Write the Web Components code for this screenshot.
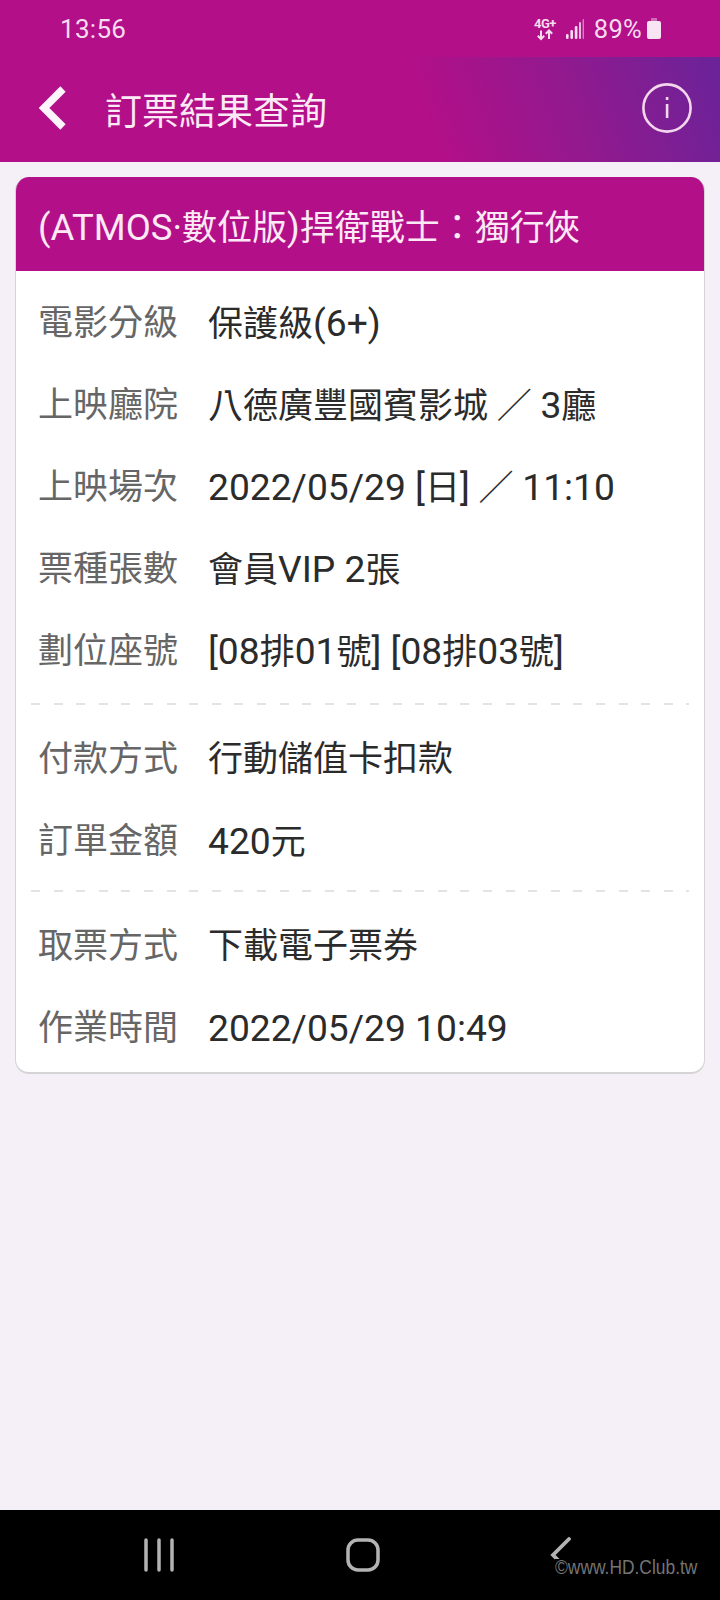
<!DOCTYPE html>
<html lang="zh-Hant">
<head>
<meta charset="utf-8">
<title>訂票結果查詢</title>
<style>
    html, body { margin: 0; padding: 0; }
    body {
        width: 720px;
        height: 1600px;
        display: flex;
        flex-direction: column;
        background: #f5f0f7;
        font-family: Roboto, "Noto Sans CJK TC", sans-serif;
        overflow: hidden;
    }
</style>
</head>
<body>
<status-bar></status-bar>
<app-header>訂票結果查詢</app-header>
<ticket-card>
    <span slot="heading"><lat-text>(ATMOS·</lat-text>數位版<lat-text>)</lat-text>捍衛戰士：獨行俠</span>
    <info-row label="電影分級">保護級<lat-text>(6+)</lat-text></info-row>
    <info-row label="上映廳院">八德廣豐國賓影城 ／ <lat-text>3</lat-text>廳</info-row>
    <info-row label="上映場次"><lat-text>2022/05/29 [</lat-text>日<lat-text>]</lat-text> ／ <lat-text>11:10</lat-text></info-row>
    <info-row label="票種張數">會員<lat-text>VIP 2</lat-text>張</info-row>
    <info-row label="劃位座號"><lat-text>[08</lat-text>排<lat-text>01</lat-text>號<lat-text>] [08</lat-text>排<lat-text>03</lat-text>號<lat-text>]</lat-text></info-row>
    <dash-line></dash-line>
    <info-row label="付款方式">行動儲值卡扣款</info-row>
    <info-row label="訂單金額"><lat-text>420</lat-text>元</info-row>
    <dash-line class="second"></dash-line>
    <info-row label="取票方式">下載電子票券</info-row>
    <info-row label="作業時間"><lat-text>2022/05/29 10:49</lat-text></info-row>
</ticket-card>
<nav-bar></nav-bar>

<script>
class LatText extends HTMLElement {
    constructor() {
        super();
        this.shadowDOM = this.attachShadow({mode: 'open'});
        // no whitespace here: it would show up between the CJK and latin runs
        this.shadowDOM.innerHTML = `<style>:host { display: inline; font-size: var(--lat-size, 37.2px); }</style><slot></slot>`;
    }
}

class StatusBar extends HTMLElement {
    constructor() {
        super();
        this.shadowDOM = this.attachShadow({mode: 'open'});
        this.shadowDOM.innerHTML = `
            <style>
                :host {
                    display: flex;
                    flex: 0 0 57px;
                    align-items: center;
                    justify-content: space-between;
                    padding: 0 59px 0 60px;
                    background: #b30f88;
                    color: #f6dcef;
                }
                .time { font-size: 26px; letter-spacing: 0.3px; }
                .right { display: flex; align-items: center; }
                .net { width: 24px; height: 24px; margin-right: 8px; }
                .sig { width: 18px; height: 20px; margin-right: 10px; }
                .pct { font-size: 25.5px; letter-spacing: 0.3px; }
                .bat { width: 14px; height: 21px; margin-left: 5px; }
                svg { display: block; }
            </style>
            <span class="time">13:56</span>
            <div class="right">
                <svg class="net" viewBox="0 0 24 24">
                    <text x="0" y="11" font-family="Roboto, sans-serif" font-size="13" font-weight="700" letter-spacing="-0.5" fill="#f6dcef">4G+</text>
                    <path d="M7 13.5v8.5M3.8 18.8 7 22l3.2-3.2M15 22v-8.5M11.8 16.7 15 13.5l3.2 3.2" fill="none" stroke="#f6dcef" stroke-width="2"/>
                </svg>
                <svg class="sig" viewBox="0 0 18 20">
                    <rect x="0" y="15" width="2.6" height="5" rx="1.2" fill="#f6dcef"/>
                    <rect x="4.4" y="11" width="2.6" height="9" rx="1.2" fill="#f6dcef"/>
                    <rect x="8.8" y="7" width="2.6" height="13" rx="1.2" fill="#f6dcef"/>
                    <rect x="13" y="3" width="2" height="17" rx="1" fill="#f6dcef" opacity=".85"/>
                    <rect x="16.6" y="0" width="1.4" height="20" rx=".7" fill="#f6dcef" opacity=".55"/>
                </svg>
                <span class="pct">89%</span>
                <svg class="bat" viewBox="0 0 14 21">
                    <rect x="4" y="0" width="6" height="3" fill="#f6dcef" opacity=".45"/>
                    <rect x="0" y="3" width="14" height="18" rx="2" fill="#f8e4f3"/>
                </svg>
            </div>
        `;
    }
}

class AppHeader extends HTMLElement {
    constructor() {
        super();
        this.shadowDOM = this.attachShadow({mode: 'open'});
        this.shadowDOM.innerHTML = `
            <style>
                :host {
                    display: flex;
                    flex: 0 0 105px;
                    align-items: center;
                    padding: 0 28px 0 37px;
                    background: linear-gradient(250deg, #6a2399 0%, #8f1a8f 20%, #b30f88 42%);
                    color: #fbe9f6;
                    font-size: 37px;
                }
                .back { width: 30px; height: 46px; margin-right: 38px; margin-top: -4px; }
                .title { flex: 1; margin-top: -2px; }
                .info { width: 50px; height: 50px; margin-top: -3px; }
                svg { display: block; }
            </style>
            <svg class="back" viewBox="0 0 30 46">
                <path d="M26 4 7 23l19 19" fill="none" stroke="#fdf3fa" stroke-width="7.5"/>
            </svg>
            <span class="title"><slot></slot></span>
            <svg class="info" viewBox="0 0 50 50">
                <circle cx="25" cy="25" r="23.6" fill="none" stroke="#f3d6ec" stroke-width="2.6"/>
                <rect x="23.8" y="21" width="2.6" height="14" fill="#f3d6ec"/>
                <rect x="23.8" y="14" width="2.6" height="3" fill="#f3d6ec"/>
            </svg>
        `;
    }
}

class TicketCard extends HTMLElement {
    constructor() {
        super();
        this.shadowDOM = this.attachShadow({mode: 'open'});
        this.shadowDOM.innerHTML = `
            <style>
                :host {
                    display: block;
                    flex: 1 1 auto;
                    padding: 15px 15px 0 15px;
                }
                .card {
                    box-sizing: border-box;
                    height: 897px;
                    border-radius: 14px;
                    border: solid #d4d4d4;
                    border-width: 0 1px 2px 1px;
                    background: #fff;
                    overflow: hidden;
                }
                .head {
                    --lat-size: 36.5px;
                    height: 94px;
                    display: flex;
                    align-items: center;
                    padding: 0 22px;
                    background: #b30f88;
                    color: #fbe9f6;
                    font-size: 35px;
                    white-space: nowrap;
                }
                .body { padding-top: 12px; }
            </style>
            <div class="card">
                <div class="head"><slot name="heading"></slot></div>
                <div class="body"><slot></slot></div>
            </div>
        `;
    }
}

class InfoRow extends HTMLElement {
    constructor() {
        super();
        this.shadowDOM = this.attachShadow({mode: 'open'});
        this.shadowDOM.innerHTML = `
            <style>
                :host {
                    display: flex;
                    align-items: center;
                    height: 82px;
                    line-height: 50px;
                    padding-left: 22px;
                    font-size: 35px;
                    white-space: nowrap;
                }
                .label { width: 170px; flex: none; color: #666666; }
                .value { color: #2b2b2b; }
            </style>
            <span class="label"></span>
            <span class="value"><slot></slot></span>
        `;
        this.shadowDOM.querySelector(".label").textContent = this.getAttribute("label");
    }
}

class DashLine extends HTMLElement {
    constructor() {
        super();
        this.shadowDOM = this.attachShadow({mode: 'open'});
        this.shadowDOM.innerHTML = `
            <style>
                :host {
                    display: block;
                    height: 2px;
                    margin: 10px 15px 14px 15px;
                    background: repeating-linear-gradient(90deg, #e4e2e5 0 9px, transparent 9px 22.6px);
                }
                :host(.second) { margin: 7px 15px 14px 15px; }
            </style>
        `;
    }
}

class NavBar extends HTMLElement {
    constructor() {
        super();
        this.shadowDOM = this.attachShadow({mode: 'open'});
        this.shadowDOM.innerHTML = `
            <style>
                :host {
                    display: flex;
                    flex: 0 0 90px;
                    position: relative;
                    align-items: center;
                    justify-content: space-between;
                    box-sizing: border-box;
                    padding: 0 148px 0 143px;
                    background: #000;
                }
                .recent { width: 32px; height: 34px; }
                .home { width: 36px; height: 36px; }
                .back { width: 22px; height: 36px; }
                .mark {
                    position: absolute;
                    left: 555px;
                    top: 49px;
                    background: #000;
                    font-family: "Liberation Sans", sans-serif;
                    font-size: 20px;
                    line-height: 16px;
                    color: #747474;
                    white-space: nowrap;
                    transform: scaleX(0.87);
                    transform-origin: left center;
                }
                svg { display: block; }
            </style>
            <svg class="recent" viewBox="0 0 32 34">
                <path d="M3 2v30M16 2v30M29 2v30" stroke="#b3b3b3" stroke-width="3.5" stroke-linecap="round" fill="none"/>
            </svg>
            <svg class="home" viewBox="0 0 36 36">
                <rect x="3" y="3" width="30" height="30" rx="10" fill="none" stroke="#b3b3b3" stroke-width="3.5"/>
            </svg>
            <svg class="back" viewBox="0 0 22 36">
                <path d="M19 2 3 18l16 16" stroke="#b3b3b3" stroke-width="3.8" stroke-linecap="round" fill="none"/>
            </svg>
            <span class="mark">©www.HD.Club.tw</span>
        `;
    }
}

customElements.define('lat-text', LatText);
customElements.define('status-bar', StatusBar);
customElements.define('app-header', AppHeader);
customElements.define('ticket-card', TicketCard);
customElements.define('info-row', InfoRow);
customElements.define('dash-line', DashLine);
customElements.define('nav-bar', NavBar);
</script>
</body>
</html>
